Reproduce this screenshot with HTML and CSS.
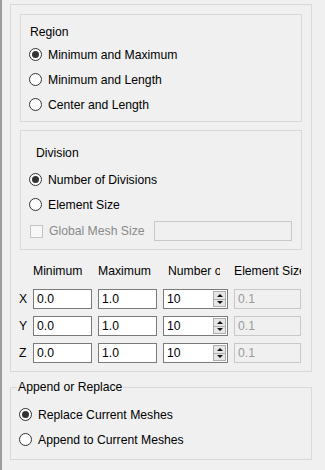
FILE: index.html
```html
<!DOCTYPE html>
<html>
  <head>
    <meta charset="utf-8">
    <title>Mesh Region</title>
    <link rel="stylesheet" href="styles.css">
  </head>
  <body>
    <div class="panel">
      <div class="group region">
        <div class="group-title">Region</div>
        <div class="radio-row"><span class="radio checked"></span>Minimum and Maximum</div>
        <div class="radio-row"><span class="radio"></span>Minimum and Length</div>
        <div class="radio-row"><span class="radio"></span>Center and Length</div>
      </div>
      <div class="group division">
        <div class="group-title">Division</div>
        <div class="radio-row"><span class="radio checked"></span>Number of Divisions</div>
        <div class="radio-row"><span class="radio"></span>Element Size</div>
        <div class="check-row disabled">
          <span class="checkbox"></span>
          <span class="check-label">Global Mesh Size</span>
          <span class="field off wide"></span>
        </div>
      </div>
      <div class="grid">
        <div></div>
        <div class="head">Minimum</div>
        <div class="head">Maximum</div>
        <div class="head indent">Number of</div>
        <div class="head">Element Size</div>

        <div class="axis">X</div>
        <div class="field">0.0</div>
        <div class="field">1.0</div>
        <div class="field spin">10<span class="spinner"><span class="up"></span><span class="down"></span></span></div>
        <div class="field off">0.1</div>

        <div class="axis">Y</div>
        <div class="field">0.0</div>
        <div class="field">1.0</div>
        <div class="field spin">10<span class="spinner"><span class="up"></span><span class="down"></span></span></div>
        <div class="field off">0.1</div>

        <div class="axis">Z</div>
        <div class="field">0.0</div>
        <div class="field">1.0</div>
        <div class="field spin">10<span class="spinner"><span class="up"></span><span class="down"></span></span></div>
        <div class="field off">0.1</div>
      </div>
    </div>
    <fieldset class="append">
      <legend>Append or Replace</legend>
      <div class="radio-row"><span class="radio checked"></span>Replace Current Meshes</div>
      <div class="radio-row"><span class="radio"></span>Append to Current Meshes</div>
    </fieldset>
  </body>
</html>
```

FILE: styles.css
```css
html {
  background-color: #f0f0f0;
}
body {
  margin: 0;
  min-height: 470px;
  box-sizing: border-box;
  border-left: 2px solid #9c9c9c;
  font-family: 'Liberation Sans', Arial, sans-serif;
  font-size: 12.2px;
  color: #000;
}
.panel {
  margin: 4px 0 0 8px;
  width: 302px;
  box-sizing: border-box;
  border: 1px solid #d9d9d9;
  padding: 9px 9px 8px;
}
.group {
  border: 1px solid #d9d9d9;
}
.region {
  padding: 7px 0 4px;
}
.division {
  margin-top: 8px;
  padding: 12px 0 4px;
}
.group-title {
  height: 20px;
  line-height: 20px;
  padding-left: 9px;
}
.division .group-title {
  padding-left: 15px;
  margin-bottom: 4px;
}
.radio-row {
  display: flex;
  align-items: center;
  height: 25px;
  padding-left: 8px;
  white-space: nowrap;
}
.radio {
  width: 13px;
  height: 13px;
  box-sizing: border-box;
  border: 1px solid #333;
  border-radius: 50%;
  background: #fff;
  margin-right: 6px;
  display: flex;
  align-items: center;
  justify-content: center;
  flex: none;
}
.radio.checked::after {
  content: '';
  width: 7px;
  height: 7px;
  border-radius: 50%;
  background: #333;
}
.check-row {
  display: flex;
  align-items: center;
  height: 28px;
  padding-left: 9px;
}
.disabled {
  color: #8a8a8a;
}
.checkbox {
  width: 13px;
  height: 13px;
  box-sizing: border-box;
  border: 1px solid #c4c4c4;
  background: #f7f7f7;
  margin-right: 6px;
}
.check-label {
  width: 105px;
}
.grid {
  margin-top: 11px;
  display: grid;
  grid-template-columns: 7px 59px 59px 65px 67px;
  grid-template-rows: 21px 20px 20px 20px;
  column-gap: 6px;
  row-gap: 7px;
}
.head {
  line-height: 20px;
  white-space: nowrap;
  overflow: hidden;
}
.head.indent {
  padding-left: 5px;
  width: 52px;
}
.axis {
  line-height: 20px;
  margin-left: -1px;
}
.field {
  box-sizing: border-box;
  height: 20px;
  border: 1px solid #7a7a7a;
  background: #fff;
  line-height: 18px;
  padding-left: 3px;
  white-space: nowrap;
}
.field.off {
  border-color: #c8c8c8;
  background: #f0f0f0;
  color: #9a9a9a;
}
.field.wide {
  display: block;
  width: 138px;
}
.spin {
  display: flex;
  justify-content: space-between;
}
.spinner {
  width: 13px;
  margin: 1px 1px 1px 0;
  display: flex;
  flex-direction: column;
  border: 1px solid #adadad;
  box-sizing: border-box;
  background: #e6e6e6;
}
.spinner span {
  flex: 1;
  display: flex;
  align-items: center;
  justify-content: center;
}
.spinner .up {
  border-bottom: 1px solid #adadad;
}
.spinner .up::after {
  content: '';
  border-left: 3px solid transparent;
  border-right: 3px solid transparent;
  border-bottom: 3px solid #111;
}
.spinner .down::after {
  content: '';
  border-left: 3px solid transparent;
  border-right: 3px solid transparent;
  border-top: 3px solid #111;
}
.append {
  margin: 8px 0 0 8px;
  width: 302px;
  box-sizing: border-box;
  border: 1px solid #d9d9d9;
  padding: 8px 0 7px 8px;
}
.append legend {
  margin-left: -2px;
  padding: 0 1px;
  line-height: 14px;
}
.append .radio-row {
  padding-left: 0;
}
```
